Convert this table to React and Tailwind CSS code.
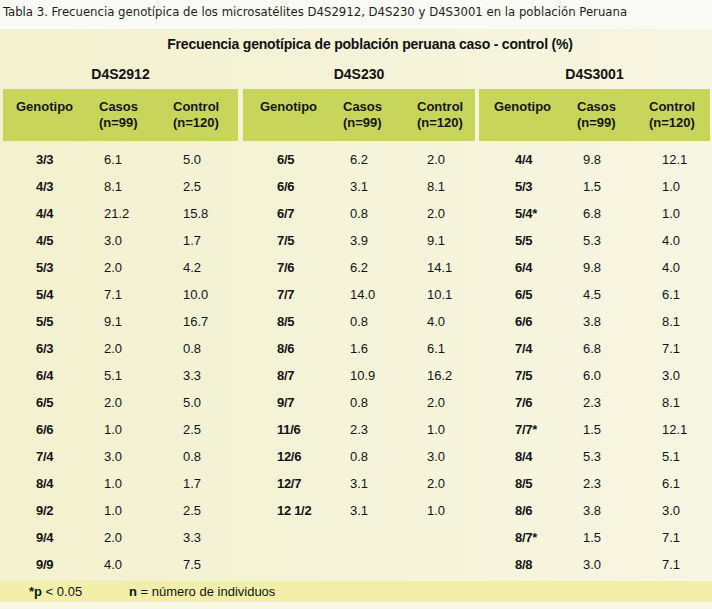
import React from "react";

const g1 = [
  ["3/3", "6.1", "5.0"], ["4/3", "8.1", "2.5"], ["4/4", "21.2", "15.8"], ["4/5", "3.0", "1.7"],
  ["5/3", "2.0", "4.2"], ["5/4", "7.1", "10.0"], ["5/5", "9.1", "16.7"], ["6/3", "2.0", "0.8"],
  ["6/4", "5.1", "3.3"], ["6/5", "2.0", "5.0"], ["6/6", "1.0", "2.5"], ["7/4", "3.0", "0.8"],
  ["8/4", "1.0", "1.7"], ["9/2", "1.0", "2.5"], ["9/4", "2.0", "3.3"], ["9/9", "4.0", "7.5"],
];
const g2 = [
  ["6/5", "6.2", "2.0"], ["6/6", "3.1", "8.1"], ["6/7", "0.8", "2.0"], ["7/5", "3.9", "9.1"],
  ["7/6", "6.2", "14.1"], ["7/7", "14.0", "10.1"], ["8/5", "0.8", "4.0"], ["8/6", "1.6", "6.1"],
  ["8/7", "10.9", "16.2"], ["9/7", "0.8", "2.0"], ["11/6", "2.3", "1.0"], ["12/6", "0.8", "3.0"],
  ["12/7", "3.1", "2.0"], ["12 1/2", "3.1", "1.0"],
];
const g3 = [
  ["4/4", "9.8", "12.1"], ["5/3", "1.5", "1.0"], ["5/4*", "6.8", "1.0"], ["5/5", "5.3", "4.0"],
  ["6/4", "9.8", "4.0"], ["6/5", "4.5", "6.1"], ["6/6", "3.8", "8.1"], ["7/4", "6.8", "7.1"],
  ["7/5", "6.0", "3.0"], ["7/6", "2.3", "8.1"], ["7/7*", "1.5", "12.1"], ["8/4", "5.3", "5.1"],
  ["8/5", "2.3", "6.1"], ["8/6", "3.8", "3.0"], ["8/7*", "1.5", "7.1"], ["8/8", "3.0", "7.1"],
];

const groups = [
  {
    name: "D4S2912",
    rows: g1,
    box: "w-[235px]",
    hdr: ["pl-[13px]", "pl-[6px]", "pl-[4px]"],
    val: ["pl-[33px]", "pl-[11px]", "pl-[14px]"],
  },
  {
    name: "D4S230",
    rows: g2,
    box: "w-[232px] ml-[5px]",
    hdr: ["pl-[17px]", "pl-[10px]", "pl-[8px]"],
    val: ["pl-[34px]", "pl-[17px]", "pl-[18px]"],
  },
  {
    name: "D4S3001",
    rows: g3,
    box: "w-[231px] ml-[4px]",
    hdr: ["pl-[15px]", "pl-[8px]", "pl-[4px]"],
    val: ["pl-[36px]", "pl-[14px]", "pl-[17px]"],
  },
];

function Group({ g }) {
  return (
    <div className={`${g.box} flex flex-col`}>
      <div className="h-[30px] flex items-center justify-center text-[14px] font-bold text-[#111]">
        {g.name}
      </div>
      <div className="h-[52px] bg-[#c8d55b] grid grid-cols-[90px_76px_1fr] pt-[10px] text-[13px] font-bold leading-[16px] text-[#161616]">
        <div className={g.hdr[0]}>Genotipo</div>
        <div className={g.hdr[1]}>
          Casos
          <br />
          (n=99)
        </div>
        <div className={g.hdr[2]}>
          Control
          <br />
          (n=120)
        </div>
      </div>
      <div className="mt-[5px] flex flex-col text-[13px] text-[#141414]">
        {g.rows.map((r, i) => (
          <div key={i} className="h-[27px] grid grid-cols-[90px_76px_1fr] items-center leading-[27px]">
            <div className={`${g.val[0]} font-bold tracking-[-0.3px]`}>{r[0]}</div>
            <div className={g.val[1]}>{r[1]}</div>
            <div className={g.val[2]}>{r[2]}</div>
          </div>
        ))}
      </div>
    </div>
  );
}

export default function App() {
  return (
    <div className="w-[712px] h-[609px] bg-[#fafaf6] flex flex-col overflow-hidden" style={{ fontFamily: '"Liberation Sans", Arial, sans-serif' }}>
      <div
        className="h-[29px] pl-[3px] pt-[3px] text-[13px] leading-[18px] text-[#1e1e1e]"
        style={{ fontFamily: '"DejaVu Sans Condensed", "DejaVu Sans", sans-serif' }}
      >
        Tabla 3. Frecuencia genotípica de los microsatélites D4S2912, D4S230 y D4S3001 en la población Peruana
      </div>
      <div className="flex-1 flex flex-col bg-gradient-to-r from-[#f3f1cf] via-[#f5f3d8] to-[#f7f6e2]">
        <div className="h-[30px] flex items-center justify-center pl-[28px] text-[14px] font-bold tracking-[-0.2px] text-[#111]">
          Frecuencia genotípica de población peruana caso - control (%)
        </div>
        <div className="flex pl-[3px]">
          {groups.map((g) => (
            <Group key={g.name} g={g} />
          ))}
        </div>
        <div className="mt-[3px] h-[21px] bg-[#f2efab] flex items-center text-[13px] text-[#141414]">
          <span className="pl-[29px] w-[129px]">
            <b>*p</b> &lt; 0.05
          </span>
          <span>
            <b>n</b> = número de individuos
          </span>
        </div>
        <div className="flex-1 bg-[#f7f6e8]" />
      </div>
    </div>
  );
}
